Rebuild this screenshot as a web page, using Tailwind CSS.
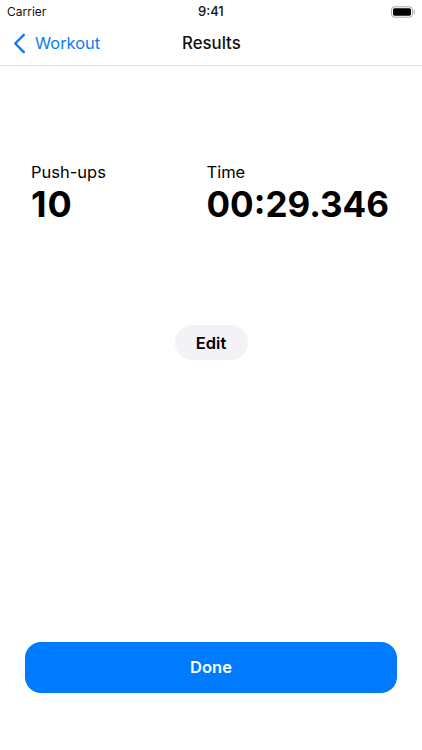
<!DOCTYPE html>
<html lang="en">
<head>
    <meta charset="UTF-8">
    <meta name="viewport" content="width=device-width, initial-scale=1.0">
    <title>Results</title>
    <script src="https://cdn.jsdelivr.net/npm/@tailwindcss/browser@4"></script>
</head>
<body class="bg-white font-['Inter',sans-serif] text-black">
    <div class="flex flex-col w-[422px] h-[750px] overflow-hidden">

        <!-- status bar -->
        <div class="relative flex items-center justify-between h-[22px] pl-[7px] pr-[7px] pt-[1px] text-[12px] leading-none text-[#111]">
            <span>Carrier</span>
            <span class="absolute left-[198px] font-medium text-[13px]">9:41</span>
            <svg width="24" height="12" viewBox="0 0 24 12" class="ml-auto">
                <rect x="0.5" y="0.8" width="21" height="10.4" rx="3" fill="none" stroke="#a8a8a8" stroke-width="1"/>
                <rect x="2" y="2.3" width="18" height="7.4" rx="1.6" fill="#000"/>
                <rect x="22.6" y="4.3" width="1.2" height="3.4" rx="0.6" fill="#a8a8a8"/>
            </svg>
        </div>

        <!-- nav bar -->
        <div class="relative flex items-center h-[44px] border-b border-[#dedede]">
            <div class="flex items-center pl-[13px] text-[#0a7cf5]">
                <svg width="13" height="21" viewBox="0 0 13 21" fill="none" stroke="#0a7cf5" stroke-width="2.4" stroke-linecap="round" stroke-linejoin="round">
                    <path d="M10.8 1.8 2.2 10.5l8.6 8.7"/>
                </svg>
                <span class="ml-[9px] text-[16.4px]">Workout</span>
            </div>
            <span class="absolute left-[182px] text-[16.8px] font-medium text-[#111]">Results</span>
        </div>

        <!-- results -->
        <div class="flex pl-[31px] pt-[95px]">
            <div class="w-[175.5px]">
                <div class="text-[16.5px] leading-[22px]">Push-ups</div>
                <div class="text-[36px] font-bold leading-[42px] tracking-[1px]">10</div>
            </div>
            <div>
                <div class="text-[16.5px] leading-[22px]">Time</div>
                <div class="text-[35px] font-bold leading-[42px]">00:29.346</div>
            </div>
        </div>

        <div class="flex justify-center pt-[100px]">
            <button class="w-[73px] h-[35px] pt-[1px] rounded-full bg-[#f2f2f7] text-[16.5px] font-semibold">Edit</button>
        </div>

        <div class="flex-1"></div>

        <div class="px-[25px] pb-[57px]">
            <button class="w-full h-[51px] rounded-[16px] bg-[#007aff] text-white text-[16.5px] font-semibold">Done</button>
        </div>
    </div>
</body>
</html>
